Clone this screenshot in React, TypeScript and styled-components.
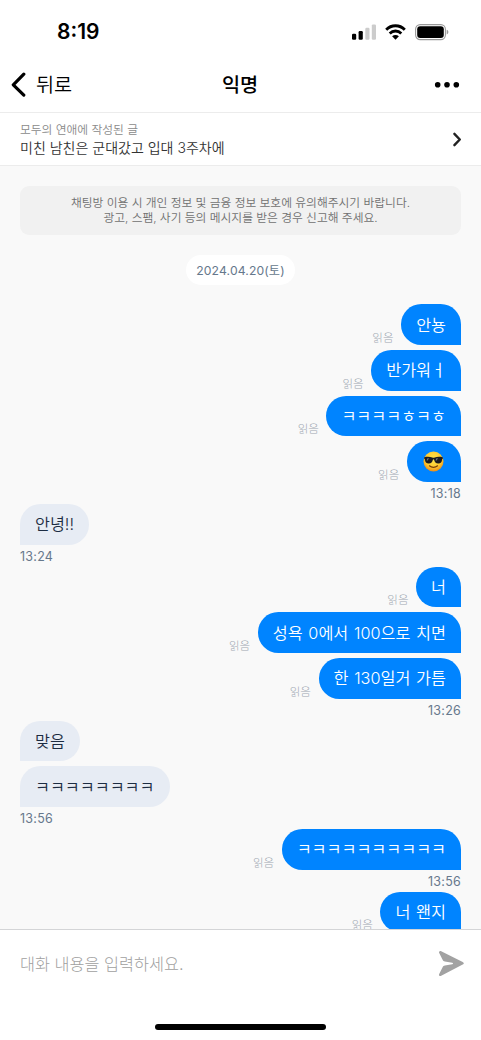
import React from "react";
import styled, { createGlobalStyle } from "styled-components";

const GlobalStyle = createGlobalStyle`
  * { box-sizing: border-box; }
  body {
    margin: 0;
    background: #fff;
    font-family: Inter, "Noto Sans CJK KR", sans-serif;
    overflow: hidden;
  }
`;

const Screen = styled.div`
  display: flex;
  flex-direction: column;
  width: 481px;
  height: 1040px;
  overflow: hidden;
  background: #fff;
`;

const StatusBar = styled.header`
  display: flex;
  flex: none;
  justify-content: space-between;
  align-items: center;
  height: 57px;
  padding: 7px 32px 0 57px;
`;

const Clock = styled.span`
  font-size: 21px;
  line-height: 26px;
  font-weight: 600;
  letter-spacing: 0;
  color: #000;
`;

const StatusIcons = styled.div`
  display: flex;
  align-items: center;
`;

const NavBar = styled.nav`
  display: grid;
  flex: none;
  grid-template-columns: 1fr auto 1fr;
  align-items: center;
  height: 56px;
  padding: 0 21px 0 11px;
  border-bottom: 1px solid #ececec;
`;

const BackButton = styled.button`
  display: flex;
  align-items: center;
  gap: 10px;
  padding: 0;
  border: 0;
  background: none;
  font: 350 19.7px/28px Inter, "Noto Sans CJK KR", sans-serif;
  color: #000;
`;

const BackLabel = styled.span`
  padding-top: 1px;
`;

const Title = styled.h1`
  margin: 0;
  padding: 1px 0 0 9px;
  font-size: 19.7px;
  line-height: 28px;
  font-weight: 500;
  color: #000;
`;

const MoreButton = styled.button`
  display: flex;
  justify-self: end;
  padding: 0;
  border: 0;
  background: none;
`;

const PostLink = styled.section`
  display: flex;
  flex: none;
  align-items: center;
  justify-content: space-between;
  height: 53px;
  padding: 0 19px 0 20px;
  border-bottom: 1px solid #ececec;
`;

const PostSource = styled.div`
  font-size: 11.75px;
  line-height: 18px;
  font-weight: 350;
  color: #8a8a8a;
`;

const PostTitle = styled.div`
  font-size: 14px;
  line-height: 18px;
  font-weight: 350;
  color: #333;
`;

const Conversation = styled.main`
  display: flex;
  flex: none;
  flex-direction: column;
  height: 763px;
  padding: 20px 20px 0;
  overflow: hidden;
  background: #f9f9f9;
`;

const Notice = styled.p`
  flex: none;
  height: 49px;
  margin: 0;
  padding: 10px 0;
  border-radius: 9px;
  background: #f1f1f1;
  font-size: 11.75px;
  line-height: 14.6px;
  font-weight: 350;
  text-align: center;
  color: #707070;
`;

const DatePill = styled.div`
  flex: none;
  align-self: center;
  height: 30px;
  margin: 20px 0 19.4px;
  padding: 0 10px;
  border-radius: 15px;
  background: #fff;
  font-size: 12.2px;
  line-height: 31px;
  letter-spacing: 0.12px;
  color: #66788c;
`;

const Group = styled.section<{ $mine: boolean }>`
  display: flex;
  flex: none;
  flex-direction: column;
  align-items: ${(p) => (p.$mine ? "flex-end" : "flex-start")};
  gap: 5px;
`;

const MessageRow = styled.div`
  display: flex;
  align-items: flex-end;
  gap: 7.6px;
`;

const Bubble = styled.div<{ $mine: boolean }>`
  display: flex;
  align-items: center;
  height: 40.6px;
  padding: 0 15px;
  border-radius: ${(p) => (p.$mine ? "20.3px 20.3px 0 20.3px" : "20.3px 20.3px 20.3px 0")};
  background: ${(p) => (p.$mine ? "#0084ff" : "#e7ecf4")};
  color: ${(p) => (p.$mine ? "#fff" : "#1c2c42")};
  font-size: 16.24px;
  line-height: 24px;
  font-weight: 350;
  word-spacing: 1.2px;
  white-space: pre;
`;

const ReadMark = styled.span`
  font-size: 11.5px;
  line-height: 14px;
  font-weight: 300;
  color: #a0a8b2;
`;

const Time = styled.time`
  height: 17.2px;
  font-size: 12.5px;
  line-height: 13px;
  letter-spacing: 0.25px;
  color: #66788c;
`;

const Composer = styled.footer`
  display: flex;
  flex: 1;
  flex-direction: column;
  align-items: center;
  border-top: 1.5px solid #d4d5d7;
`;

const InputRow = styled.div`
  display: flex;
  align-items: center;
  justify-content: space-between;
  width: 100%;
  height: 67px;
  padding: 0 16px 0 20px;
`;

const Placeholder = styled.span`
  font-size: 16.3px;
  line-height: 24px;
  font-weight: 300;
  color: #a0a0a0;
`;

const HomeIndicator = styled.div`
  width: 171px;
  height: 6px;
  margin-top: 27px;
  border-radius: 3px;
  background: #000;
`;

const StatusGlyph = styled.svg<{ $gap: number }>`
  display: block;
  margin-left: ${(p) => p.$gap}px;
`;

const EmojiGlyph = styled.svg`
  display: block;
  margin: 0 1.6px;
`;

const SignalIcon = () => (
  <StatusGlyph $gap={0} width="25" height="17" viewBox="0 0 25 17">
    <rect x="0" y="9.7" width="4.2" height="6" rx="1.2" fill="#000" />
    <rect x="6.6" y="7" width="4.2" height="8.7" rx="1.2" fill="#000" />
    <rect x="13.3" y="3.8" width="4.2" height="11.9" rx="1.2" fill="#ccc" />
    <rect x="19.8" y="0.4" width="4.2" height="15.3" rx="1.2" fill="#ccc" />
  </StatusGlyph>
);

const WifiIcon = () => (
  <StatusGlyph $gap={8} width="21" height="17" viewBox="0 0 21 17">
    <g fill="none" stroke="#000" strokeWidth="2.8">
      <path d="M1.2 5.8C6.3.4 14.7.4 19.8 5.8" />
      <path d="M4.7 9.4c3.3-3.2 8.3-3.2 11.6 0" />
    </g>
    <path d="M7.1 12.2c2-1.7 4.8-1.7 6.8 0l-3.4 3.5z" fill="#000" />
  </StatusGlyph>
);

const BatteryIcon = () => (
  <StatusGlyph $gap={9} width="34" height="17" viewBox="0 0 34 17">
    <rect x=".6" y=".6" width="29.8" height="15" rx="4.6" fill="none" stroke="#999" strokeWidth="1.1" />
    <rect x="2.2" y="2.2" width="26.6" height="11.8" rx="3" fill="#000" />
    <path d="M31.7 5.8c2.2.7 2.2 3.9 0 4.6z" fill="#999" />
  </StatusGlyph>
);

const BackIcon = () => (
  <svg width="15" height="25" viewBox="0 0 15 25">
    <path d="M12.8 2.2 2.3 12.8l10.5 10.3" fill="none" stroke="#000" strokeWidth="3.2" strokeLinecap="round" strokeLinejoin="round" />
  </svg>
);

const MoreIcon = () => (
  <svg width="26" height="6" viewBox="0 0 26 6">
    <circle cx="3.7" cy="2.8" r="2.8" />
    <circle cx="13" cy="2.8" r="2.8" />
    <circle cx="22.3" cy="2.8" r="2.8" />
  </svg>
);

const ChevronIcon = () => (
  <svg width="10" height="15" viewBox="0 0 10 15">
    <path d="m2.4 1.8 5.4 5.7-5.4 5.7" fill="none" stroke="#222" strokeWidth="2.4" strokeLinecap="round" strokeLinejoin="round" />
  </svg>
);

const SendIcon = () => (
  <svg width="27" height="27" viewBox="0 0 27 27">
    <path
      d="M3.2 1.2 24.7 12c1.5.8 1.5 1.8 0 2.6L3.2 25.8c-1.5.7-2.7-.5-2-1.9l3.4-6.6c.5-1 1.2-1.5 2.3-1.7l7.3-1.3c1.1-.3 1.1-1.2 0-1.5l-7.3-1.3c-1.1-.2-1.8-.7-2.3-1.7L1.2 3.1C.5 1.7 1.7.5 3.2 1.2z"
      fill="#a2a2a2"
    />
  </svg>
);

const SunglassesFace = () => (
  <EmojiGlyph width="21" height="21" viewBox="0 0 21 21">
    <defs>
      <radialGradient id="face" cx=".5" cy=".38" r=".62">
        <stop offset="0" stopColor="#ffe64c" />
        <stop offset=".65" stopColor="#ffcb30" />
        <stop offset="1" stopColor="#ed8a16" />
      </radialGradient>
    </defs>
    <circle cx="10.5" cy="10.5" r="10" fill="url(#face)" />
    <path d="M6.4 14.8c2.2 2 5.9 2 8.2 0" fill="none" stroke="#7a3d08" strokeWidth="1.2" strokeLinecap="round" />
    <path
      d="M1.2 6.2c3-.8 6-.6 8.1.3.8.3 1.6.3 2.4 0 2.1-.9 5.1-1.1 8.1-.3v1.6l-.7.5c-.2 3-1.4 4.1-3.8 4.1-2.6 0-3.7-1.4-4.2-3.7-.2-.7-1-.7-1.2 0-.5 2.3-1.6 3.7-4.2 3.7-2.4 0-3.6-1.1-3.8-4.1l-.7-.5z"
      fill="#1b1b20"
    />
    <path d="m4 7.5 2.3-.2-2.5 3zM13 7.5l2.3-.2-2.5 3z" fill="#70737a" />
  </EmojiGlyph>
);

type MessageGroup = { mine: boolean; time?: string; items: React.ReactNode[] };

const groups: MessageGroup[] = [
  { mine: true, time: "13:18", items: ["안뇽", "반가워ㅓ", "ㅋㅋㅋㅋㅎㅋㅎ", <SunglassesFace key="face" />] },
  { mine: false, time: "13:24", items: ["안녕!!"] },
  { mine: true, time: "13:26", items: ["너", "성욕 0에서 100으로 치면", "한 130일거 가틈"] },
  { mine: false, time: "13:56", items: ["맞음", "ㅋㅋㅋㅋㅋㅋㅋㅋ"] },
  { mine: true, time: "13:56", items: ["ㅋㅋㅋㅋㅋㅋㅋㅋㅋㅋ"] },
  { mine: true, items: ["너 왠지"] },
];

export default function App() {
  return (
    <>
      <GlobalStyle />
      <Screen>
        <StatusBar>
          <Clock>8:19</Clock>
          <StatusIcons>
            <SignalIcon />
            <WifiIcon />
            <BatteryIcon />
          </StatusIcons>
        </StatusBar>
        <NavBar>
          <BackButton>
            <BackIcon />
            <BackLabel>뒤로</BackLabel>
          </BackButton>
          <Title>익명</Title>
          <MoreButton aria-label="더보기">
            <MoreIcon />
          </MoreButton>
        </NavBar>
        <PostLink>
          <div>
            <PostSource>모두의 연애에 작성된 글</PostSource>
            <PostTitle>미친 남친은 군대갔고 입대 3주차에</PostTitle>
          </div>
          <ChevronIcon />
        </PostLink>
        <Conversation>
          <Notice>
            채팅방 이용 시 개인 정보 및 금융 정보 보호에 유의해주시기 바랍니다.
            <br />
            광고, 스팸, 사기 등의 메시지를 받은 경우 신고해 주세요.
          </Notice>
          <DatePill>2024.04.20(토)</DatePill>
          {groups.map((group, i) => (
            <Group key={i} $mine={group.mine}>
              {group.items.map((item, j) => (
                <MessageRow key={j}>
                  {group.mine && <ReadMark>읽음</ReadMark>}
                  <Bubble $mine={group.mine}>{item}</Bubble>
                </MessageRow>
              ))}
              {group.time && <Time>{group.time}</Time>}
            </Group>
          ))}
        </Conversation>
        <Composer>
          <InputRow>
            <Placeholder>대화 내용을 입력하세요.</Placeholder>
            <SendIcon />
          </InputRow>
          <HomeIndicator />
        </Composer>
      </Screen>
    </>
  );
}
